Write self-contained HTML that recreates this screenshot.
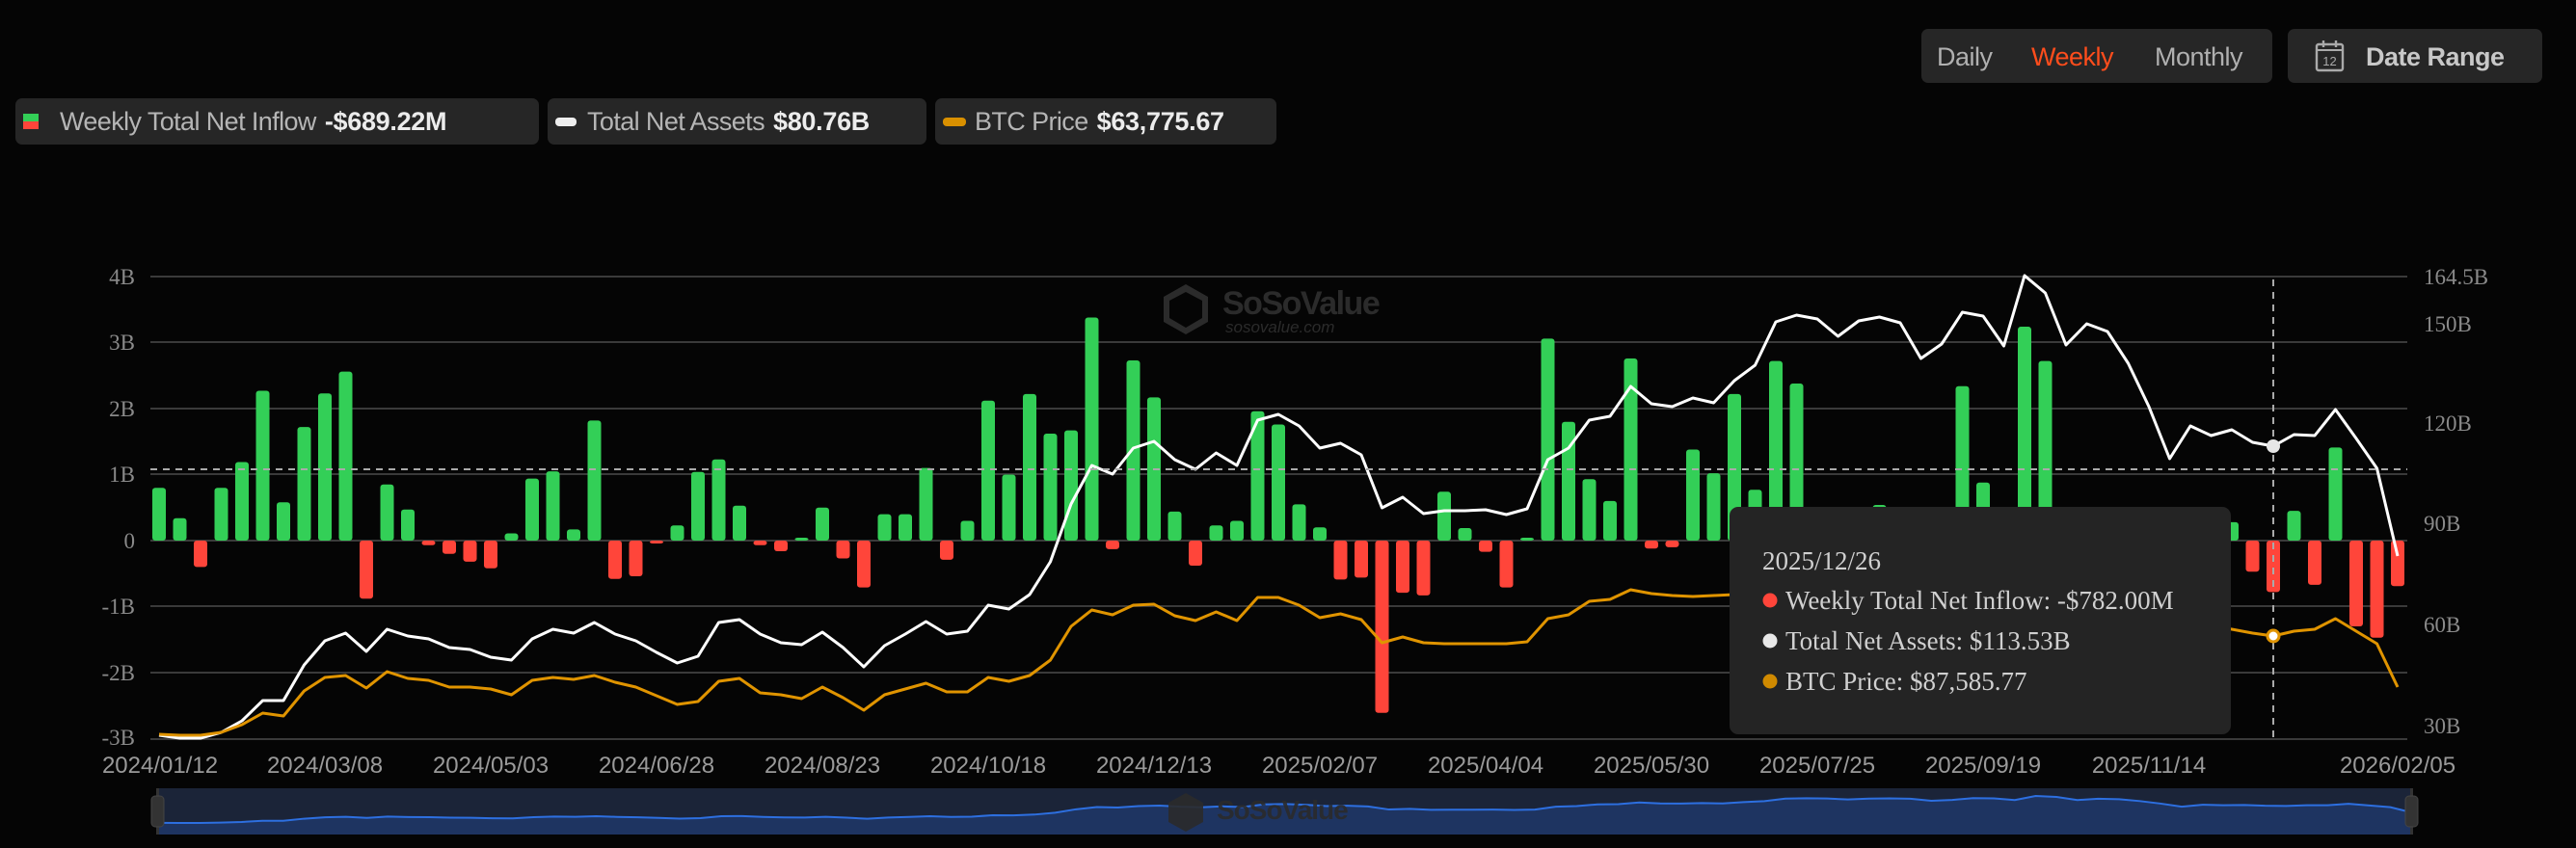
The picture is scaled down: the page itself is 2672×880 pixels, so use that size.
<!DOCTYPE html>
<html><head><meta charset="utf-8">
<style>
html,body{margin:0;padding:0;background:#050505;width:2672px;height:880px;overflow:hidden;font-family:"Liberation Sans",sans-serif;}
.box{position:absolute;background:#262626;border-radius:7px;}
.lg{position:absolute;top:102px;height:48px;background:#262626;border-radius:7px;display:flex;align-items:center;white-space:nowrap;font-size:27px;color:#b5b5b5;letter-spacing:-0.6px}
.lg b{color:#ececec;margin-left:9px;letter-spacing:-0.3px}
.tab{position:absolute;top:44px;font-size:27px;color:#b0b0b0;letter-spacing:-0.5px}
</style></head><body>
<div class="box" style="left:1993px;top:30px;width:364px;height:56px"></div>
<div class="tab" style="left:2009px">Daily</div>
<div class="tab" style="left:2107px;color:#ff4d1c">Weekly</div>
<div class="tab" style="left:2235px">Monthly</div>
<div class="box" style="left:2373px;top:30px;width:264px;height:56px"></div>
<svg style="position:absolute;left:2401px;top:41px" width="32" height="34" viewBox="0 0 32 34"><rect x="2" y="5" width="27" height="27" rx="2" fill="none" stroke="#aaa" stroke-width="2.4"/><line x1="2" y1="11" x2="29" y2="11" stroke="#aaa" stroke-width="2"/><line x1="9" y1="1" x2="9" y2="8" stroke="#aaa" stroke-width="2.4"/><line x1="22" y1="1" x2="22" y2="8" stroke="#aaa" stroke-width="2.4"/><text x="15.5" y="27" font-size="13" fill="#aaa" text-anchor="middle" font-family="Liberation Sans">12</text></svg>
<div class="tab" style="left:2454px;font-weight:bold;color:#c8c8c8">Date Range</div>

<div class="lg" style="left:16px;width:543px"><span style="display:inline-block;width:16px;height:16px;margin:0 22px 0 8px;background:linear-gradient(#33cf57 50%,#ff453a 50%)"></span>Weekly Total Net Inflow <b>-$689.22M</b></div>
<div class="lg" style="left:568px;width:393px"><span style="display:inline-block;width:22px;height:9px;border-radius:4px;background:#eee;margin:0 11px 0 8px"></span>Total Net Assets <b>$80.76B</b></div>
<div class="lg" style="left:970px;width:354px"><span style="display:inline-block;width:24px;height:9px;border-radius:4px;background:#d99000;margin:0 9px 0 8px"></span>BTC Price <b>$63,775.67</b></div>

<svg id="ch" style="position:absolute;left:0;top:0" width="2672" height="880">
<g stroke="#3a3a3a" stroke-width="2">
<line x1="156" y1="287" x2="2497" y2="287"/><line x1="156" y1="355" x2="2497" y2="355"/><line x1="156" y1="424" x2="2497" y2="424"/><line x1="156" y1="492" x2="2497" y2="492"/><line x1="156" y1="561" x2="2497" y2="561"/><line x1="156" y1="629" x2="2497" y2="629"/><line x1="156" y1="698" x2="2497" y2="698"/><line x1="156" y1="767" x2="2497" y2="767"/>
</g>
<g font-family="Liberation Serif" font-size="23" fill="#8a8a8a" text-anchor="end">
<text x="140" y="295">4B</text><text x="140" y="363">3B</text><text x="140" y="432">2B</text><text x="140" y="500">1B</text><text x="140" y="569">0</text><text x="140" y="637">-1B</text><text x="140" y="706">-2B</text><text x="140" y="773">-3B</text>
</g>
<g font-family="Liberation Serif" font-size="23" fill="#8a8a8a">
<text x="2514" y="295">164.5B</text><text x="2514" y="344">150B</text><text x="2514" y="447">120B</text><text x="2514" y="551">90B</text><text x="2514" y="656">60B</text><text x="2514" y="761">30B</text>
</g>
<g font-family="Liberation Sans" font-size="24" fill="#9a9a9a" text-anchor="middle">
<text x="166" y="802">2024/01/12</text><text x="337" y="802">2024/03/08</text><text x="509" y="802">2024/05/03</text><text x="681" y="802">2024/06/28</text><text x="853" y="802">2024/08/23</text><text x="1025" y="802">2024/10/18</text><text x="1197" y="802">2024/12/13</text><text x="1369" y="802">2025/02/07</text><text x="1541" y="802">2025/04/04</text><text x="1713" y="802">2025/05/30</text><text x="1885" y="802">2025/07/25</text><text x="2057" y="802">2025/09/19</text><text x="2229" y="802">2025/11/14</text><text x="2487" y="802">2026/02/05</text>
</g>
<g fill="#2b2b2b">
<path d="M1230 295 L1253 308 L1253 334 L1230 347 L1207 334 L1207 308 Z M1230 303 L1213 312 L1213 330 L1230 340 L1247 330 L1247 312 Z" fill-rule="evenodd"/>
<text x="1268" y="326" font-family="Liberation Sans" font-weight="bold" font-size="34" letter-spacing="-1.5">SoSoValue</text>
<text x="1271" y="345" font-family="Liberation Sans" font-style="italic" font-size="17">sosovalue.com</text>
</g>
<g id="bars"></g>
<path id="wl" fill="none" stroke="#fff" stroke-width="3" stroke-linejoin="round"/>
<path id="ol" fill="none" stroke="#e09400" stroke-width="3" stroke-linejoin="round"/>
<line x1="156" y1="487" x2="2497" y2="487" stroke="#aaa" stroke-width="2" stroke-dasharray="7,6"/>
<line x1="2358" y1="290" x2="2358" y2="767" stroke="#aaa" stroke-width="2" stroke-dasharray="7,6"/>
<circle cx="2358" cy="463" r="7" fill="#e6e6e6"/>
<circle cx="2358" cy="660" r="6" fill="#fff" stroke="#e09400" stroke-width="3"/>
<rect x="1794" y="526" width="520" height="236" rx="9" fill="#242424"/>
<g font-family="Liberation Serif" font-size="27" fill="#d0d0d0">
<text x="1828" y="591">2025/12/26</text>
<circle cx="1836" cy="623" r="7.5" fill="#ff453a"/><text x="1852" y="632">Weekly Total Net Inflow: -$782.00M</text>
<circle cx="1836" cy="665" r="7.5" fill="#e8e8e8"/><text x="1852" y="674">Total Net Assets: $113.53B</text>
<circle cx="1836" cy="707" r="7.5" fill="#d08a00"/><text x="1852" y="716">BTC Price: $87,585.77</text>
</g>
<rect x="164" y="818" width="2337" height="48" fill="#1b2438"/>
<path id="sl" fill="#1e3461" stroke="none"/>
<path id="sll" fill="none" stroke="#2d6fe0" stroke-width="2"/>
<g fill="#2b2b2b" opacity="0.9">
<path d="M1230 823 L1248 833 L1248 853 L1230 863 L1212 853 L1212 833 Z"/>
<text x="1262" y="850" font-family="Liberation Sans" font-weight="bold" font-size="28" letter-spacing="-1">SoSoValue</text>
</g>
<rect x="162" y="818" width="3" height="48" fill="#333"/>
<rect x="157" y="826" width="13" height="32" rx="4" fill="#333" stroke="#444"/>
<rect x="2500" y="818" width="3" height="48" fill="#333"/>
<rect x="2495" y="826" width="13" height="32" rx="4" fill="#333" stroke="#444"/>
</svg>
<script>
var v=[.8,.34,-.4,.8,1.19,2.27,.58,1.72,2.23,2.56,-.88,.85,.47,-.07,-.2,-.32,-.42,.11,.94,1.05,.17,1.82,-.58,-.54,-.04,.23,1.04,1.23,.53,-.07,-.16,.03,.5,-.27,-.71,.4,.4,1.1,-.29,.3,2.12,1.0,2.22,1.62,1.67,3.38,-.13,2.73,2.17,.44,-.38,.23,.3,1.96,1.76,.55,.2,-.59,-.56,-2.61,-.79,-.83,.74,.19,-.17,-.71,.01,3.06,1.8,.93,.6,2.76,-.12,-.1,1.38,1.02,2.22,.77,2.72,2.38,.2,-.3,.1,.54,-.2,.3,-.25,2.34,.88,-.4,3.24,2.72,-.3,.25,-.2,.1,-.35,.2,-.15,.1,.28,-.47,-.78,.45,-.67,1.41,-1.3,-1.47,-.69];
var w=[763,766,766,760,748,727,727,690,665,657,676,653,660,663,672,674,682,685,663,653,657,646,658,665,677,688,681,646,643,658,667,669,656,672,692,670,658,645,658,655,628,632,617,583,523,483,492,465,458,477,487,470,483,436,430,442,465,460,472,527,516,533,530,530,529,534,528,477,465,436,432,401,419,422,413,418,395,379,334,327,331,349,333,329,335,372,357,324,328,359,286,304,358,336,344,377,422,476,442,452,446,459,463,451,452,425,455,486,577];
var o=[762,763,763,760,752,740,743,717,703,701,714,697,704,706,713,713,715,721,706,703,705,701,708,713,722,731,728,707,704,719,721,725,713,724,737,721,715,709,718,718,703,707,701,685,650,633,638,628,627,639,644,635,644,620,620,628,641,637,643,667,661,667,668,668,668,668,666,642,638,624,622,612,616,618,619,618,617,619,614,612,612,608,605,606,603,605,600,598,600,602,592,596,610,612,618,632,645,640,648,650,653,657,660,655,653,642,655,668,713];
var ns="http://www.w3.org/2000/svg",g=document.getElementById("bars"),Z=561,K=68.5;
for(var i=0;i<v.length;i++){var x=165+21.5*i,h=Math.max(Math.abs(v[i])*K,3),r=document.createElementNS(ns,"rect");
r.setAttribute("x",x-7);r.setAttribute("width",14);r.setAttribute("rx",3);
r.setAttribute("y",v[i]>=0?Z-h:Z);r.setAttribute("height",h);r.setAttribute("fill",v[i]>=0?"#33cf57":"#ff453a");g.appendChild(r);}
function P(a){var s="";for(var i=0;i<a.length;i++)s+=(i?"L":"M")+(165+21.5*i)+" "+a[i];return s;}
document.getElementById("wl").setAttribute("d",P(w));
document.getElementById("ol").setAttribute("d",P(o));
var s="";for(var i=0;i<w.length;i++){var x=164+2337*i/(w.length-1),y=826+(w[i]-286)/(766-286)*28;s+=(i?"L":"M")+x+" "+y;}
document.getElementById("sll").setAttribute("d",s);
document.getElementById("sl").setAttribute("d",s+"L2501 866L164 866Z");
</script>
</body></html>
